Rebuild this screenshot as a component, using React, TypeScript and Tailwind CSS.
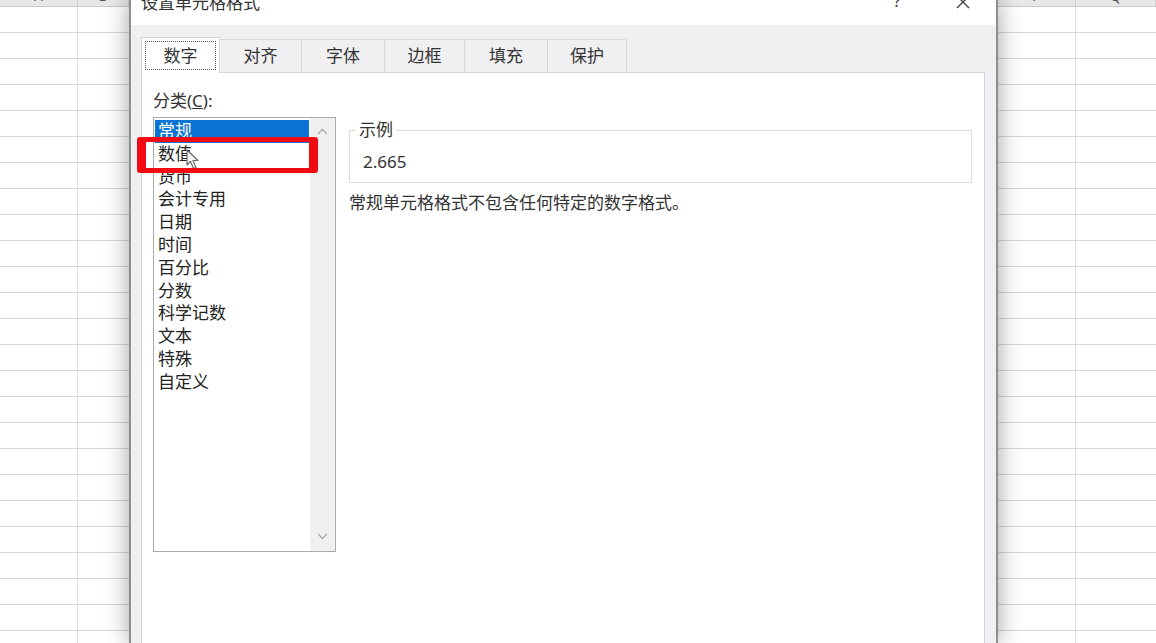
const rows = Array.from({ length: 25 }, (_, i) => i);

const tabs = [
  { label: "数字", w: "w-[79px]", active: true },
  { label: "对齐", w: "w-[82px]", active: false },
  { label: "字体", w: "w-[83px]", active: false },
  { label: "边框", w: "w-[80px]", active: false },
  { label: "填充", w: "w-[83px]", active: false },
  { label: "保护", w: "w-[79px]", active: false },
];

const categories = [
  "常规",
  "数值",
  "货币",
  "会计专用",
  "日期",
  "时间",
  "百分比",
  "分数",
  "科学记数",
  "文本",
  "特殊",
  "自定义",
];

function Sheet({ letters }: { letters: string[] }) {
  return (
    <div className="flex h-full flex-col bg-white">
      <div className="flex h-[7px] shrink-0 overflow-hidden border-b border-[#c9c9c9] bg-[#e8e8e8]">
        {letters.map((l, i) => (
          <div
            key={i}
            className={`flex justify-center border-r border-[#d0d0d0] ${
              i === 0 ? "w-[78px] shrink-0" : "flex-1"
            }`}
          >
            <span className="-mt-[11px] text-[14px] leading-[14px] text-[#555]">{l}</span>
          </div>
        ))}
      </div>
      {rows.map((r) => (
        <div key={r} className="flex h-[26px] shrink-0 border-b border-[#d8d8d8]">
          <div className="w-[78px] shrink-0 border-r border-[#dedede]" />
          <div className="flex-1" />
        </div>
      ))}
    </div>
  );
}

function Chevron({ up }: { up?: boolean }) {
  return (
    <svg width="11" height="7" viewBox="0 0 11 7" className={up ? "" : "rotate-180"}>
      <path d="M1 6 L5.5 1.5 L10 6" fill="none" stroke="#a8a8a8" strokeWidth="1.3" />
    </svg>
  );
}

function Cursor() {
  return (
    <svg width="13" height="21" viewBox="0 0 13 21">
      <path
        d="M1 1 L1 16 L4.5 12.5 L7.5 19.5 L10 18.5 L7 11.5 L12 11.5 Z"
        fill="#fafafa"
        stroke="#6a6a6a"
        strokeWidth="1.2"
        strokeLinejoin="round"
      />
    </svg>
  );
}

export default function App() {
  return (
    <div className="flex h-[643px] w-[1156px] overflow-hidden bg-white font-['Noto_Sans','Noto_Sans_CJK_SC',sans-serif] text-[#2b2b2b]">
      <div className="w-[129px] shrink-0">
        <Sheet letters={["A", "B"]} />
      </div>

      {/* dialog */}
      <div className="relative z-10 flex h-full w-[869px] shrink-0 flex-col border-x-2 border-[#8f8f8f] bg-[#f0eff1] shadow-[0_0_22px_rgba(0,0,0,0.38)]">
        <div className="flex h-[25px] shrink-0 items-start bg-white pl-[10px] pr-[26px]">
          <span className="-mt-[7px] text-[17px] leading-[20px] text-[#333]">设置单元格格式</span>
          <span className="-mt-[9px] ml-auto text-[17px] leading-[20px] text-[#444]">?</span>
          <svg width="14" height="14" viewBox="0 0 14 14" className="-mt-[5px] ml-[55px]">
            <path d="M1 1 L13 13 M13 1 L1 13" stroke="#444" strokeWidth="1.4" />
          </svg>
        </div>

        <div className="flex h-[47px] shrink-0 items-end pl-[10px]">
          {tabs.map((t) =>
            t.active ? (
              <div
                key={t.label}
                className={`${t.w} relative z-10 -mb-px h-[36px] shrink-0 border-x border-t border-[#d6d6d6] bg-white p-[3px]`}
              >
                <div className="flex h-full items-center justify-center border border-dotted border-[#5a5a5a] text-[17px] text-[#333]">
                  {t.label}
                </div>
              </div>
            ) : (
              <div
                key={t.label}
                className={`${t.w} flex h-[33px] shrink-0 items-center justify-center border-r border-t border-[#dadada] text-[17px] text-[#333]`}
              >
                {t.label}
              </div>
            )
          )}
        </div>

        <div className="ml-[10px] mr-[11px] flex flex-1 border-x border-t border-[#d6d6d6] bg-white pl-[11px]">
          {/* category list */}
          <div className="flex flex-col pt-[17px]">
            <div className="text-[17px] leading-[22px] text-[#333]">
              分类(<span className="underline">C</span>):
            </div>
            <div className="relative mt-[5px] flex h-[435px] w-[183px] border border-[#ababab] bg-white">
              <div className="flex-1 px-px pt-[2px]">
                {categories.map((c, i) => (
                  <div
                    key={c}
                    className={`h-[22.8px] pl-[3px] text-[17px] leading-[22.8px] ${
                      i === 0 ? "bg-[#0a74d4] text-white" : "text-[#222]"
                    }`}
                  >
                    {c}
                  </div>
                ))}
              </div>
              <div className="flex w-[25px] flex-col items-center justify-between bg-[#f0f0f0] pb-[11px] pt-[10px]">
                <Chevron up />
                <Chevron />
              </div>

              <div className="absolute left-[32px] top-[31px]">
                <Cursor />
              </div>
              <div className="absolute -left-[17px] top-[19px] h-[36px] w-[181px] rounded-[3px] border-x-[9px] border-y-[5px] border-[#f20b12]" />
            </div>
          </div>

          {/* sample + description */}
          <div className="ml-[13px] flex flex-col pt-[57px]">
            <div className="relative h-[53px] w-[623px] border border-[#dedede] pl-[13px] pt-[20px]">
              <span className="absolute -top-[12px] left-[6px] bg-white px-[3px] text-[17px] leading-[22px] text-[#333]">
                示例
              </span>
              <div className="text-[17px] leading-[22px] text-[#333]">2.665</div>
            </div>
            <div className="mt-[9px] text-[17px] leading-[22px] text-[#333]">
              常规单元格格式不包含任何特定的数字格式。
            </div>
          </div>
        </div>
      </div>

      <div className="flex-1">
        <Sheet letters={["P", "Q"]} />
      </div>
    </div>
  );
}
